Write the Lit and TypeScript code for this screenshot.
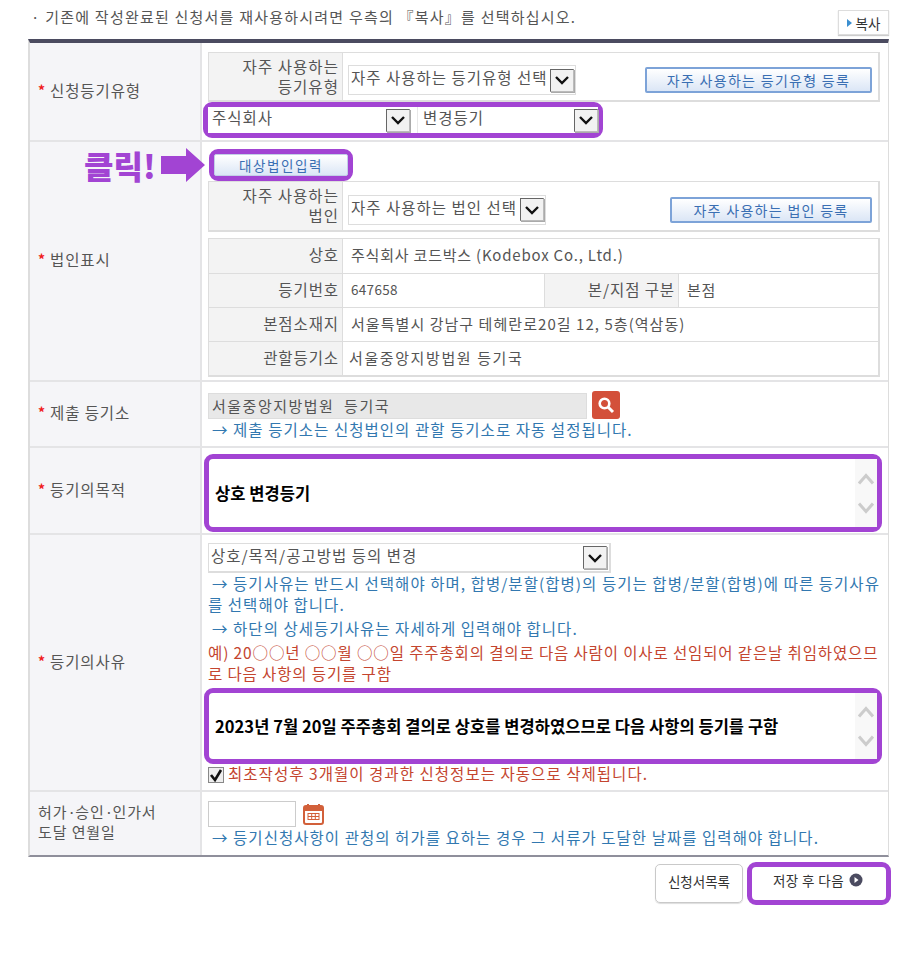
import { LitElement, html, css } from "lit";
import { customElement } from "lit/decorators.js";

const chevron = html`<svg width="16" height="10" viewBox="0 0 16 10"><path d="M2 2l6 6 6-6" fill="none" stroke="#111" stroke-width="2.4"/></svg>`;
const scroll = html`<div class="scr">
  <svg width="16" height="12" viewBox="0 0 16 12"><path d="M1 10.5l7-8 7 8" fill="none" stroke="#ccc" stroke-width="3"/></svg>
  <svg width="16" height="12" viewBox="0 0 16 12"><path d="M1 1.5l7 8 7-8" fill="none" stroke="#ccc" stroke-width="3"/></svg>
</div>`;

@customElement("app-root")
export class AppRoot extends LitElement {
  static styles = css`
    :host { display: block; width: 922px; height: 956px; background: #fff; font-family: "Noto Sans CJK KR", "Noto Sans", sans-serif; font-size: 14px; color: #555; box-sizing: border-box; padding: 0 33px 0 28px; }
    * { box-sizing: border-box; }
    .head { height: 39px; display: flex; justify-content: space-between; padding: 7px 0 0 3px; }
    .head .msg { font-size: 15px; letter-spacing: 1.22px; line-height: 20px; color: #555; white-space: nowrap; }
    .copy { margin-top: 3px; width: 51px; height: 25px; border: 1px solid #ddd; box-shadow: 0 1px 1px #ccc; display: flex; align-items: center; justify-content: center; gap: 4px; font-size: 13.5px; color: #333; background: #fff; }
    .copy i { width: 0; height: 0; border-left: 5px solid #3b8fd0; border-top: 4px solid transparent; border-bottom: 4px solid transparent; }
    .table { width: 861px; border-top: 4px solid #4b4b60; border-bottom: 2px solid #8f8f9b; border-left: 2px solid #ddd; border-right: 1px solid #ddd; }
    .row { display: grid; grid-template-columns: 172px 1fr; position: relative; }
    .row + .row { border-top: 2px solid #e4e4e6; }
    .th { background: #f5f5f8; border-right: 2px solid #e4e4e6; display: flex; align-items: center; padding: 0 0 4px 8px; font-size: 15.5px; letter-spacing: .9px; white-space: nowrap; }
    .th b { color: #f01c1c; font-weight: 700; margin-right: 4px; font-size: 14px; }
    .th.plain { line-height: 20px; font-size: 15px; letter-spacing: .9px; }
    .dot { letter-spacing: -3.6px; padding-right: 3px; }
    .td { padding-left: 6px; min-width: 0; }
    .r1 { height: 97px; } .r2 { height: 240px; } .r3 { height: 66px; } .r4 { height: 87px; } .r5 { height: 257px; } .r6 { height: 65px; }
    .r1 .td { padding-top: 9px; }
    .box { width: 672px; height: 50px; border: 2px solid #ddd; border-top-width: 1px; border-left-width: 1px; display: flex; align-items: center; }
    .r2 .box { height: 51px; }
    .box .lab { width: 134px; height: 100%; background: #f3f3f3; border-right: 1px solid #ddd; padding: 0 3px 2px 0; font-size: 15.5px; line-height: 20px; letter-spacing: 1.05px; display: flex; align-items: center; justify-content: flex-end; text-align: right; }
    .sel { display: flex; align-items: center; justify-content: space-between; background: #fff; border: 1px solid #ddd; font-size: 15.5px; letter-spacing: 1px; color: #555; padding: 0 1px 0 2px; height: 30px; white-space: nowrap; }
    .t { padding-bottom: 6px; }
    .arrow { width: 24px; height: 23px; flex: none; background: #f2f2f2; border: 1px solid #777; border-color: #666 #bbb #bbb #666; display: flex; align-items: center; justify-content: center; box-shadow: 1px 1px 0 #aaa; }
    .mark { border: 5px solid #a244d3; border-radius: 9px; background: #fff; }
    .pair { display: flex; align-items: center; gap: 6px; width: 400px; height: 36px; margin-left: -5px; }
    .pair .sel { border: 0; height: 26px; padding-left: 4px; }
    .pair .a { width: 203px; }
    .pair .b { flex: 1; border-left: 1px solid #e8e8e8; padding: 0 0 0 5px; }
    .btn { height: 26px; background: linear-gradient(#fff, #dbe6f6); border: 2px solid #7da3d8; border-radius: 2px; color: #3a6fb3; font-size: 14px; letter-spacing: 1.3px; display: flex; align-items: center; justify-content: center; white-space: nowrap; }
    .box .sel { margin: 7px 0 0 5px; }
    .box .btn { margin: 7px 6px 0 auto; }
    .pick { width: 144px; height: 32px; border-radius: 9px; margin: 7px 0 0 1px; }
    .pick .btn { height: 22px; font-size: 13.5px; letter-spacing: 1.6px; border: 1px solid #c2cfe6; }
    .info { margin-top: 6px; width: 672px; border: 2px solid #ddd; border-width: 1px 2px 2px 1px; }
    .irow { display: grid; grid-template-columns: 134px 1fr; height: 34px; }
    .irow.four { grid-template-columns: 134px 202px 134px 1fr; }
    .irow + .irow { border-top: 1px solid #ddd; }
    .l { background: #f3f3f3; border-right: 1px solid #ddd; text-align: right; padding-right: 3px; font-size: 15.5px; letter-spacing: .9px; line-height: 31px; white-space: nowrap; }
    .v { padding-left: 8px; font-size: 15px; letter-spacing: .8px; line-height: 31px; border-right: 1px solid #ddd; white-space: nowrap; }
    .v:last-child { border-right: 0; }
    .v.addr { letter-spacing: 1.05px; }
    .v.court { letter-spacing: 1.6px; padding-left: 6px; }
    .v.num { font-size: 13.5px; letter-spacing: .3px; }
    .note { color: #3278b0; font-size: 15.5px; letter-spacing: 1.04px; line-height: 21px; text-indent: 4px; white-space: nowrap; }
    .red { color: #c4452f; text-indent: 0; }
    .tight { letter-spacing: .87px; }
    .search { display: flex; align-items: flex-end; gap: 5px; margin-top: 9px; height: 28px; }
    .search .in { width: 379px; height: 26px; background: #e8e8e8; border: 1px solid #ddd; padding-left: 3px; font-size: 15px; letter-spacing: 1.5px; line-height: 23px; color: #555; white-space: nowrap; }
    .sbtn { width: 28px; height: 28px; border-radius: 3px; background: #d3503a; display: flex; align-items: center; justify-content: center; }
    .area { width: 678px; height: 78px; display: flex; align-items: center; justify-content: space-between; margin-left: -4px; padding-left: 6px; color: #000; font-weight: 700; font-size: 16.5px; letter-spacing: .05px; white-space: nowrap; }
    .scr { width: 22px; height: 100%; background: #f8f8f8; display: flex; flex-direction: column; align-items: center; justify-content: center; gap: 17px; flex: none; }
    .r4 .td { padding-top: 6px; }
    .r5 .td { padding-top: 8px; }
    .long { width: 403px; height: 30px; border: 2px solid #ddd; border-width: 1px 2px 2px 1px; }
    .long .arrow { margin-right: 1px; }
    .gapT { padding-top: 3px; }
    .area2 { margin-top: 4px; height: 76px; }
    .chk { display: flex; align-items: center; gap: 4px; height: 20px; margin-top: 1px; }
    .cb { width: 16px; height: 16px; background: #eee; border: 1px solid #888; display: flex; align-items: center; justify-content: center; flex: none; }
    .chk .note { padding-bottom: 3px; }
    .r6 .td { padding-top: 9px; }
    .date { display: flex; align-items: center; gap: 7px; height: 26px; }
    .date .in { width: 88px; height: 26px; border: 1px solid #ccc; background: #fff; }
    .foot { display: flex; justify-content: flex-end; align-items: center; gap: 4px; margin-right: -2px; padding-top: 5px; }
    .list { width: 88px; height: 39px; border: 1px solid #c9c9c9; border-radius: 5px; display: flex; align-items: center; justify-content: center; font-size: 13.5px; color: #333; padding-bottom: 5px; box-shadow: 0 1px 1px #ddd; }
    .save { width: 144px; height: 43px; display: flex; align-items: center; justify-content: center; gap: 5px; font-size: 13.5px; letter-spacing: .4px; color: #333; padding: 0 2px 7px 0; }
    .anno { position: absolute; left: 54px; top: 4px; display: flex; align-items: center; gap: 5px; color: #a244d3; font-weight: 900; font-size: 32px; line-height: 38px; white-space: nowrap; }
  `;

  render() {
    return html`
      <div class="head">
        <div class="msg">· 기존에 작성완료된 신청서를 재사용하시려면 우측의 『복사』를 선택하십시오.</div>
        <div class="copy"><i></i>복사</div>
      </div>
      <div class="table">
        <div class="row r1">
          <div class="th"><b>*</b>신청등기유형</div>
          <div class="td">
            <div class="box">
              <div class="lab"><span>자주 사용하는<br />등기유형</span></div>
              <div class="sel" style="width:228px"><span class="t">자주 사용하는 등기유형 선택</span><span class="arrow">${chevron}</span></div>
              <div class="btn" style="width:227px">자주 사용하는 등기유형 등록</div>
            </div>
            <div class="mark pair">
              <div class="sel a"><span class="t">주식회사</span><span class="arrow">${chevron}</span></div>
              <div class="sel b"><span class="t">변경등기</span><span class="arrow">${chevron}</span></div>
            </div>
          </div>
        </div>
        <div class="row r2">
          <div class="th"><b>*</b>법인표시</div>
          <div class="td">
            <div class="mark pick"><div class="btn">대상법인입력</div></div>
            <div class="box">
              <div class="lab"><span>자주 사용하는<br />법인</span></div>
              <div class="sel" style="width:198px"><span class="t">자주 사용하는 법인 선택</span><span class="arrow">${chevron}</span></div>
              <div class="btn" style="width:202px">자주 사용하는 법인 등록</div>
            </div>
            <div class="info">
              <div class="irow"><div class="l">상호</div><div class="v">주식회사 코드박스 (Kodebox Co., Ltd.)</div></div>
              <div class="irow four"><div class="l">등기번호</div><div class="v num">647658</div><div class="l">본/지점 구분</div><div class="v">본점</div></div>
              <div class="irow"><div class="l">본점소재지</div><div class="v addr">서울특별시 강남구 테헤란로20길 12, 5층(역삼동)</div></div>
              <div class="irow"><div class="l">관할등기소</div><div class="v court">서울중앙지방법원 등기국</div></div>
            </div>
          </div>
          <div class="anno">클릭!
            <svg width="44" height="34" viewBox="0 0 44 34"><path d="M0 8h25V0l19 17-19 17V26H0z" fill="#a244d3"/></svg>
          </div>
        </div>
        <div class="row r3">
          <div class="th"><b>*</b>제출 등기소</div>
          <div class="td">
            <div class="search">
              <div class="in">서울중앙지방법원&nbsp; 등기국</div>
              <div class="sbtn"><svg width="18" height="18" viewBox="0 0 18 18"><circle cx="7.5" cy="7.5" r="4.8" fill="none" stroke="#fff" stroke-width="2.6"/><path d="M11 11l5 5" stroke="#fff" stroke-width="3"/></svg></div>
            </div>
            <div class="note">→ 제출 등기소는 신청법인의 관할 등기소로 자동 설정됩니다.</div>
          </div>
        </div>
        <div class="row r4">
          <div class="th"><b>*</b>등기의목적</div>
          <div class="td">
            <div class="mark area">상호 변경등기 ${scroll}</div>
          </div>
        </div>
        <div class="row r5">
          <div class="th"><b>*</b>등기의사유</div>
          <div class="td">
            <div class="sel long"><span class="t">상호/목적/공고방법 등의 변경</span><span class="arrow">${chevron}</span></div>
            <div class="note">→ 등기사유는 반드시 선택해야 하며, 합병/분할(합병)의 등기는 합병/분할(합병)에 따른 등기사유<br />를 선택해야 합니다.</div>
            <div class="note gapT">→ 하단의 상세등기사유는 자세하게 입력해야 합니다.</div>
            <div class="note red tight gapT">예) 20○○년 ○○월 ○○일 주주총회의 결의로 다음 사람이 이사로 선임되어 같은날 취임하였으므<br />로 다음 사항의 등기를 구함</div>
            <div class="mark area area2">2023년 7월 20일 주주총회 결의로 상호를 변경하였으므로 다음 사항의 등기를 구함 ${scroll}</div>
            <div class="chk">
              <div class="cb"><svg width="14" height="14" viewBox="0 0 14 14"><path d="M2 7l4 5 6-10" fill="none" stroke="#111" stroke-width="2.6"/></svg></div>
              <div class="note red">최초작성후 3개월이 경과한 신청정보는 자동으로 삭제됩니다.</div>
            </div>
          </div>
        </div>
        <div class="row r6">
          <div class="th plain"><span>허가<span class="dot">·</span>승인<span class="dot">·</span>인가서<br />도달 연월일</span></div>
          <div class="td">
            <div class="date">
              <div class="in"></div>
              <svg width="21" height="22" viewBox="0 0 21 22"><rect x="1" y="3" width="19" height="18" rx="2" fill="#fff" stroke="#d2603a" stroke-width="2"/><rect x="1" y="3" width="19" height="5" fill="#d2603a"/><path d="M5 1v4M16 1v4" stroke="#d2603a" stroke-width="2"/><path d="M5 10.5h11M5 13.5h11M5 16.5h11M5 10v7M8.7 10v7M12.3 10v7M16 10v7" stroke="#d2603a" stroke-width="1"/></svg>
            </div>
            <div class="note">→ 등기신청사항이 관청의 허가를 요하는 경우 그 서류가 도달한 날짜를 입력해야 합니다.</div>
          </div>
        </div>
      </div>
      <div class="foot">
        <div class="list">신청서목록</div>
        <div class="mark save">저장 후 다음
          <svg width="14" height="14" viewBox="0 0 14 14"><circle cx="7" cy="7" r="6.5" fill="#4b4b60"/><path d="M5.5 4l4 3-4 3z" fill="#fff"/></svg>
        </div>
      </div>
    `;
  }
}
